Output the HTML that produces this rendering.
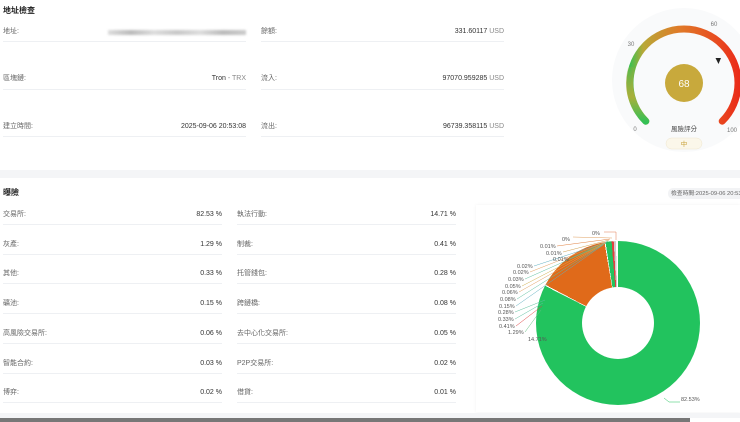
<!DOCTYPE html>
<html><head><meta charset="utf-8"><style>
*{margin:0;padding:0;box-sizing:border-box}
body{width:740px;height:422px;overflow:hidden;background:#fff;font-family:"Liberation Sans","Noto Sans CJK TC",sans-serif;color:#333;position:relative}
.a{position:absolute;white-space:nowrap;line-height:10px}
.lb{font-size:7px;color:#666}
.v{font-size:7px;color:#333;text-align:right}
.u{color:#888}
.ln{position:absolute;height:1px;background:#eef0f3}
.h{font-size:8px;font-weight:bold;color:#222}
</style></head><body>
<div class="a h" style="left:3px;top:6px">地址檢查</div>

<div class="a lb" style="left:3px;top:27px">地址:</div>
<div class="a" style="left:108px;top:30px;width:138px;height:5px;background:linear-gradient(90deg,#ddd,#bbb,#ddd,#c8c8c8,#ddd,#bbb,#ccc);filter:blur(1px)"></div>
<div class="ln" style="left:3px;top:41px;width:243px"></div>
<div class="a lb" style="left:3px;top:74px">區塊鏈:</div>
<div class="a v" style="left:100px;top:74px;width:146px">Tron <span class="u">- TRX</span></div>
<div class="ln" style="left:3px;top:89px;width:243px"></div>
<div class="a lb" style="left:3px;top:122px">建立時間:</div>
<div class="a v" style="left:100px;top:122px;width:146px">2025-09-06 20:53:08</div>
<div class="ln" style="left:3px;top:136px;width:243px"></div>

<div class="a lb" style="left:261px;top:27px">餘額:</div>
<div class="a v" style="left:360px;top:27px;width:144px">331.60117 <span class="u">USD</span></div>
<div class="ln" style="left:261px;top:41px;width:243px"></div>
<div class="a lb" style="left:261px;top:74px">流入:</div>
<div class="a v" style="left:360px;top:74px;width:144px">97070.959285 <span class="u">USD</span></div>
<div class="ln" style="left:261px;top:89px;width:243px"></div>
<div class="a lb" style="left:261px;top:122px">流出:</div>
<div class="a v" style="left:360px;top:122px;width:144px">96739.358115 <span class="u">USD</span></div>
<div class="ln" style="left:261px;top:136px;width:243px"></div>

<svg class="a" style="left:590px;top:0" width="150" height="160" viewBox="590 0 150 160">
<defs><linearGradient id="g" x1="630" y1="0" x2="740" y2="0" gradientUnits="userSpaceOnUse">
<stop offset="0" stop-color="#3cc050"/><stop offset="0.12" stop-color="#b8a838"/><stop offset="0.45" stop-color="#e07a28"/><stop offset="0.8" stop-color="#e84a20"/><stop offset="1" stop-color="#ea2a18"/></linearGradient>
<linearGradient id="g2" x1="0" y1="122" x2="0" y2="60" gradientUnits="userSpaceOnUse"><stop offset="0" stop-color="#34c055"/><stop offset="0.4" stop-color="#a8b03a"/><stop offset="1" stop-color="#c9a33a" stop-opacity="0"/></linearGradient></defs>
<circle cx="684" cy="80" r="72" fill="#f9fafb"/>
<path d="M645.8 121.2 A54 54 0 1 1 722.2 121.2" fill="none" stroke="url(#g)" stroke-width="7" stroke-linecap="round"/>
<path d="M645.8 121.2 A54 54 0 0 1 631 70" fill="none" stroke="url(#g2)" stroke-width="7" stroke-linecap="round"/>
<circle cx="684" cy="83" r="19" fill="#c8a93c"/>
<text x="684" y="87" font-size="10" fill="#fff" text-anchor="middle" font-family="Liberation Sans">68</text>
<path d="M715.5 58 L721 58 L718.5 64 Z" fill="#222"/>
<text x="635" y="131" font-size="6" fill="#777" text-anchor="middle">0</text>
<text x="631" y="46" font-size="6" fill="#777" text-anchor="middle">30</text>
<text x="714" y="26" font-size="6" fill="#777" text-anchor="middle">60</text>
<text x="732" y="132" font-size="6" fill="#777" text-anchor="middle">100</text>
<text x="684" y="131" font-size="6.5" fill="#444" text-anchor="middle" font-family="Noto Sans CJK TC">風險評分</text>
<rect x="666" y="138" width="36" height="11" rx="5.5" fill="#fbf7ea" stroke="#eee6cf" stroke-width="0.5"/>
<text x="684" y="146" font-size="6.5" fill="#c9a23a" text-anchor="middle" font-family="Noto Sans CJK TC">中</text>
</svg>

<div class="a" style="left:0;top:170px;width:740px;height:8px;background:#f4f5f7"></div>
<div class="a h" style="left:3px;top:188px">曝險</div>
<div class="a" style="left:668px;top:188px;width:80px;height:11px;border-radius:5px;background:#f2f3f5;font-size:5.8px;color:#666;padding:1px 0 0 3px">檢查時間:2025-09-06 20:53</div>

<div class="a" style="left:476px;top:205px;width:264px;height:207px;background:#fff;box-shadow:0 0 3px rgba(0,0,0,0.06)"></div>

<div id="rows"></div>
<script>
var L=[["交易所:","82.53 %"],["灰產:","1.29 %"],["其他:","0.33 %"],["礦池:","0.15 %"],["高風險交易所:","0.06 %"],["智能合約:","0.03 %"],["博弈:","0.02 %"]];
var R=[["執法行動:","14.71 %"],["制裁:","0.41 %"],["托管錢包:","0.28 %"],["跨鏈橋:","0.08 %"],["去中心化交易所:","0.05 %"],["P2P交易所:","0.02 %"],["借貸:","0.01 %"]];
var h="";
for(var i=0;i<7;i++){var y=210+i*29.7;
h+='<div class="a lb" style="left:3px;top:'+y+'px">'+L[i][0]+'</div><div class="a v" style="left:120px;top:'+y+'px;width:102px">'+L[i][1]+'</div><div class="ln" style="left:3px;top:'+(y+14)+'px;width:219px"></div>';
h+='<div class="a lb" style="left:237px;top:'+y+'px">'+R[i][0]+'</div><div class="a v" style="left:350px;top:'+y+'px;width:106px">'+R[i][1]+'</div><div class="ln" style="left:237px;top:'+(y+14)+'px;width:219px"></div>';}
document.getElementById("rows").innerHTML=h;
</script>

<div class="a" style="left:536px;top:241px;width:164px;height:164px;border-radius:50%;background:conic-gradient(#22c35e 0deg 297deg,#fff 297deg 297.8deg,#e06a1a 297.8deg 350.5deg,#fff 350.5deg 351.2deg,#22c35e 351.2deg 355.5deg,#e04040 355.5deg 357deg,#ccc 357deg 358.5deg,#fff 358.5deg 360deg)"></div>
<div class="a" style="left:582px;top:287px;width:72px;height:72px;border-radius:50%;background:#fff"></div>

<svg class="a" style="left:476px;top:205px" width="264" height="207" viewBox="476 205 264 207">
<g fill="none" stroke-width="0.5">
<polyline points="604,232 616,232 616,240" stroke="#e07a50"/>
<polyline points="573,237 612,238" stroke="#e0a060"/>
<polyline points="557,246 610,239" stroke="#e08040"/>
<polyline points="563,252 609,240" stroke="#d0a050"/>
<polyline points="569,259 608,241" stroke="#60c080"/>
<polyline points="534,266 607,242" stroke="#60b0c0"/>
<polyline points="530,272 606,242" stroke="#e0a060"/>
<polyline points="525,279 606,243" stroke="#60c0a0"/>
<polyline points="522,286 605,243" stroke="#d0b050"/>
<polyline points="519,292 604,244" stroke="#e0a060"/>
<polyline points="517,299 604,244" stroke="#60c0a0"/>
<polyline points="516,306 603,245" stroke="#60b0c0"/>
<polyline points="515,312 545,300" stroke="#60c0a0"/>
<polyline points="515,319 543,303" stroke="#60c0a0"/>
<polyline points="516,326 542,306" stroke="#e04040"/>
<polyline points="525,332 541,310" stroke="#60c080"/>
<polyline points="664,398 669,402 680,402" stroke="#22c35e"/>
</g>
<g font-size="5.5" fill="#555" font-family="Liberation Sans">
<text x="592" y="235">0%</text><text x="562" y="241">0%</text><text x="540" y="248">0.01%</text><text x="546" y="255">0.01%</text><text x="553" y="261">0.01%</text><text x="517" y="268">0.02%</text><text x="513" y="274">0.02%</text><text x="508" y="281">0.03%</text><text x="505" y="288">0.05%</text><text x="502" y="294">0.06%</text><text x="500" y="301">0.08%</text><text x="499" y="308">0.15%</text><text x="498" y="314">0.28%</text><text x="498" y="321">0.33%</text><text x="499" y="328">0.41%</text><text x="508" y="334">1.29%</text><text x="528" y="341">14.71%</text><text x="681" y="401">82.53%</text>
</g></svg>

<div class="a" style="left:0;top:413px;width:740px;height:5px;background:#f4f5f7"></div>
<div class="a" style="left:0;top:418px;width:690px;height:4px;background:#777"></div>
</body></html>
